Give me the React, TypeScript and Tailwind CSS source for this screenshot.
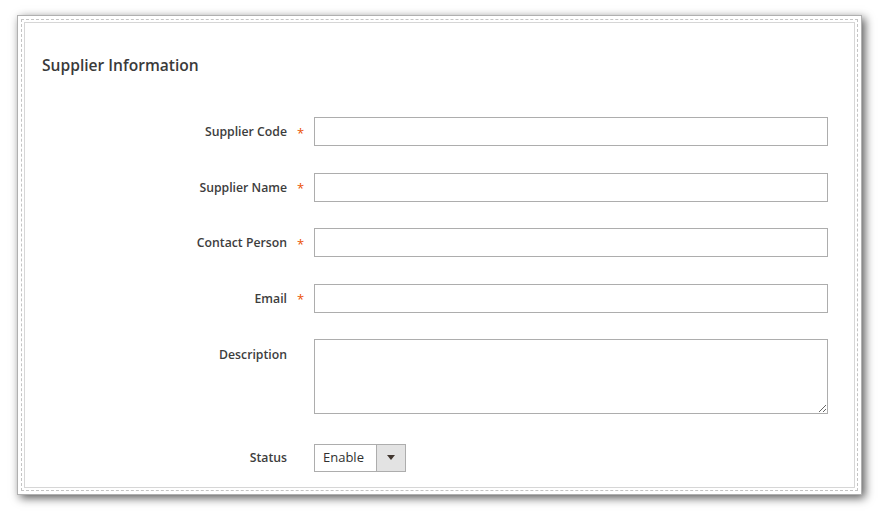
import React from "react";

const font = { fontFamily: '"Open Sans", "Noto Sans", sans-serif' };

function Field({ label, required, children, top = false }: { label: string; required?: boolean; children: React.ReactNode; top?: boolean }) {
  return (
    <div className={`flex ${top ? "items-start" : "items-center"}`}>
      <div className={`w-[262px] text-right text-[12.25px] font-semibold text-[#3d3d3d] ${top ? "pt-[7px]" : "pt-[2px]"}`}>{label}</div>
      <div className={`w-[27px] text-center text-[13px] text-[#eb5202] ${top ? "pt-[7px]" : "pt-[4px]"}`}>{required ? "*" : ""}</div>
      {children}
    </div>
  );
}

export default function App() {
  return (
    <div className="h-[511px] w-[881px] bg-white pl-[17px] pt-[15px]" style={font}>
      <div className="h-[480px] w-[845px] border border-[#b0b0b0] bg-white p-[3px] shadow-[3px_3px_9px_rgba(0,0,0,0.65)]">
        <div className="h-full w-full border border-dashed border-[#c4c4c4] p-[2px]">
          <div className="h-full w-full border border-[#d6d6d6]">
            <h2 className="ml-[17px] mt-[32px] text-[15.6px] font-semibold leading-[20px] text-[#3a3a3a]">Supplier Information</h2>
            <div className="mt-[42px] flex flex-col gap-[26.5px]">
              <Field label="Supplier Code" required>
                <input className="h-[29px] w-[514px] border border-[#adadad] bg-white outline-none" />
              </Field>
              <Field label="Supplier Name" required>
                <input className="h-[29px] w-[514px] border border-[#adadad] bg-white outline-none" />
              </Field>
              <Field label="Contact Person" required>
                <input className="h-[29px] w-[514px] border border-[#adadad] bg-white outline-none" />
              </Field>
              <Field label="Email" required>
                <input className="h-[29px] w-[514px] border border-[#adadad] bg-white outline-none" />
              </Field>
              <Field label="Description" top>
                <textarea className="h-[75px] w-[514px] border border-[#adadad] bg-white outline-none" />
              </Field>
              <div className="mt-[3px]">
                <Field label="Status">
                  <div className="flex h-[28px] w-[92px] border border-[#adadad] bg-white">
                    <div className="flex flex-1 items-center pl-[8px] text-[13px] text-[#303030]">Enable</div>
                    <div className="flex w-[29px] items-center justify-center border-l border-[#adadad] bg-[#e3e3e3]">
                      <svg width="8" height="5" viewBox="0 0 8 5"><path d="M0 0h8L4 5z" fill="#41362f" /></svg>
                    </div>
                  </div>
                </Field>
              </div>
            </div>
          </div>
        </div>
      </div>
    </div>
  );
}
